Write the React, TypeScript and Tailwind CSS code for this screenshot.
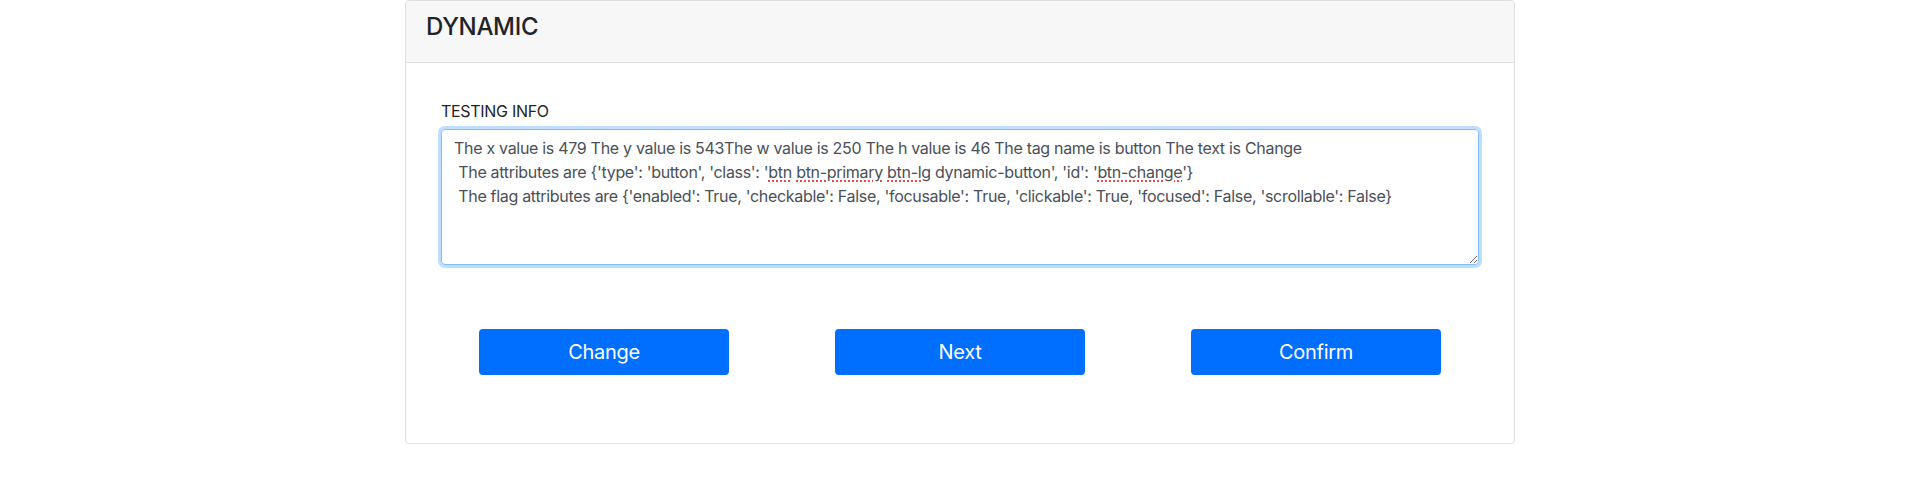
import React from 'react';

const font = { fontFamily: 'Inter, "Noto Sans", "Liberation Sans", sans-serif' };

const Squiggle = ({ children }: { children: React.ReactNode }) => (
    <span className="underline decoration-dotted decoration-[#ea4a4a] decoration-2 underline-offset-[3px]">{children}</span>
);

export default function App() {
    const buttons = ['Change', 'Next', 'Confirm'];

    return (
        <div className="w-full min-h-[492px] bg-white flex justify-center tracking-[-0.019em]" style={font}>
            <div className="w-[1110px] h-[444px] border border-[#dfdfdf] rounded-[4px] flex flex-col">
                {/* header */}
                <div className="bg-[#f7f7f7] border-b border-[#dfdfdf] px-5 pt-3 pb-3 rounded-t-[4px]">
                    <h4 className="text-[24px] leading-[1.2] font-medium text-[#212529] mb-2">DYNAMIC</h4>
                </div>

                {/* body */}
                <div className="px-5 pt-[36px]">
                    <div className="px-[15px]">
                        <label className="block text-[16px] leading-6 text-[#212529] mb-[6px]">TESTING INFO</label>
                        <div className="h-[136px] w-full border border-[#80bdff] rounded-[4px] shadow-[0_0_0_3px_rgba(0,123,255,0.25)] px-3 py-[6px] text-[16px] leading-6 text-[#495057] whitespace-pre-wrap overflow-auto resize-y">
                            {'The x value is 479 The y value is 543The w value is 250 The h value is 46 The tag name is button The text is Change\n The attributes are {\'type\': \'button\', \'class\': \''}
                            <Squiggle>btn</Squiggle>{' '}<Squiggle>btn-primary</Squiggle>{' '}<Squiggle>btn-lg</Squiggle>
                            {' dynamic-button\', \'id\': \''}
                            <Squiggle>btn-change</Squiggle>
                            {'\'}\n The flag attributes are {\'enabled\': True, \'checkable\': False, \'focusable\': True, \'clickable\': True, \'focused\': False, \'scrollable\': False}'}
                        </div>
                    </div>

                    <div className="grid grid-cols-3 mt-[64px]">
                        {buttons.map(label => (
                            <div key={label} className="flex justify-center">
                                <button className="w-[250px] h-[46px] bg-[#006fff] text-white text-[20px] leading-[1.5] rounded-[4px]">
                                    {label}
                                </button>
                            </div>
                        ))}
                    </div>
                </div>
            </div>
        </div>
    );
}
